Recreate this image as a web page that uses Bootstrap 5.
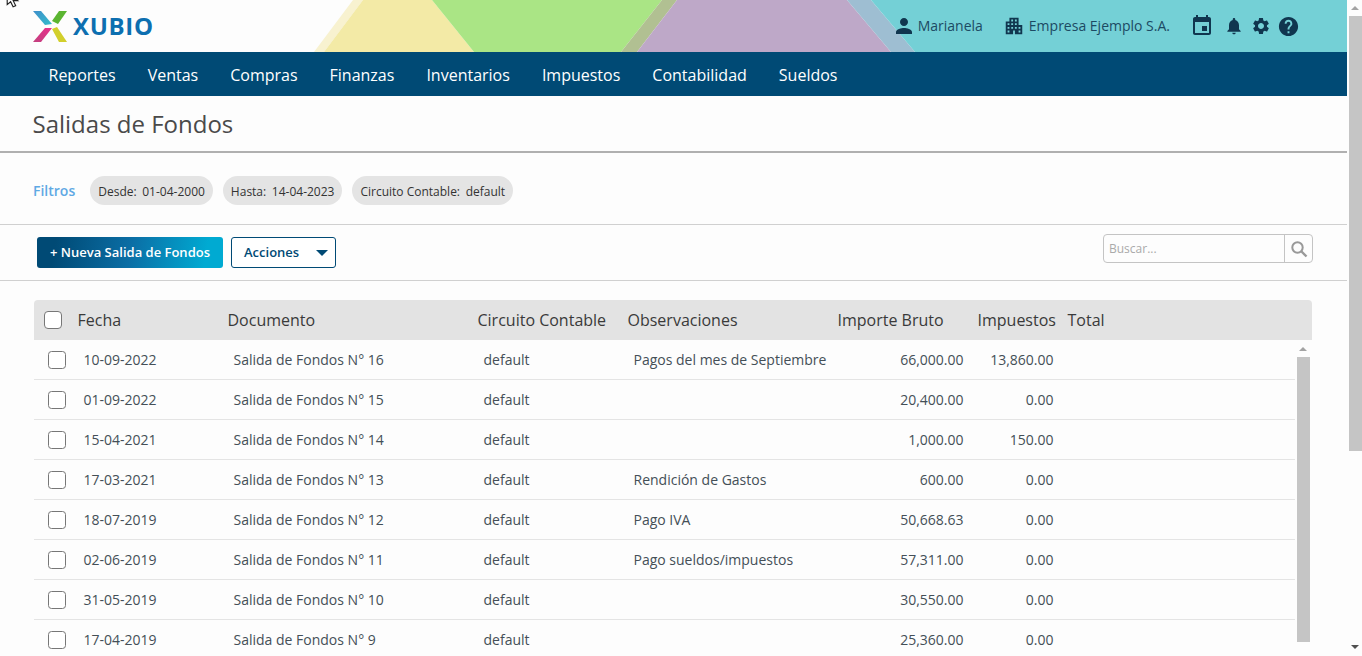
<!DOCTYPE html>
<html lang="es">
<head>
  <meta charset="UTF-8">
  <meta name="viewport" content="width=device-width, initial-scale=1.0">
  <title>Salidas de Fondos</title>
  <link rel="stylesheet" href="https://cdn.jsdelivr.net/npm/bootstrap@5.3.3/dist/css/bootstrap.min.css">
  <style>
    html, body { height: 656px; overflow: hidden; }
    body { background: #fdfdfd; font-family: "Open Sans", "Liberation Sans", sans-serif; color: #3d4852; }
    .app-main { width: 1347px; flex: none; height: 656px; overflow: hidden; }
    .page-bar { width: 15px; flex: none; padding-left: 2px; }
    .bar-thumb { background: #c5c5c5; }
    .arrow-up, .arrow-down { width: 0; height: 0; border-left: 4px solid transparent; border-right: 4px solid transparent; }
    .arrow-up { border-bottom: 4px solid #a3a3a3; }
    .arrow-down { border-top: 4px solid #505050; }
    .page-bar .arrow-up { margin: 6px 0 6px 2px; }
    .page-bar .bar-thumb { height: 435px; }
    .page-bar .arrow-down { margin: auto 0 7px 2px; }

    .top-head { height: 52px; }
    .head-shapes { position: absolute; left: 0; top: 0; width: 1347px; height: 52px; }
    .top-head > .head-row { position: relative; height: 52px; padding-left: 33px; padding-right: 47px; }
    .cursor-mark { position: absolute; left: 6px; top: -9px; }
    .logo-word { font-family: "Open Sans", sans-serif; font-weight: 700; font-size: 24px; letter-spacing: .7px; color: #0d6fb0; line-height: 1; margin-left: 6px; }
    .head-item { font-size: 14px; color: #1c4a63; line-height: 1; }
    .head-ico { fill: #10364f; display: block; flex: none; }
    .ico-user { margin-right: 2px; }
    .ico-firm { margin-right: 4px; }
    .item-firm { margin-left: 20px; }
    .ico-cal { margin-left: 20px; }
    .ico-bell { margin-left: 10px; }
    .ico-gear { margin-left: 7px; }
    .ico-help { margin-left: 6px; }

    .main-nav { background: #004a75; height: 44px; padding-left: 32.5px; }
    .main-nav .nav-link { color: #fff; font-size: 16px; padding: 1px 16px 0; line-height: 44px; }

    .title-bar { height: 57px; padding: 11px 0 0 32.5px; border-bottom: 2px solid #b0b0b0; }
    .title-bar h1 { font-size: 24px; font-weight: 400; color: #4a4a4a; margin: 0; line-height: 34px; }

    .filter-row { height: 72px; padding: 4px 0 0 33px; border-bottom: 1px solid #d0d0d0; }
    .filter-label { font-size: 14px; font-weight: 600; color: #5fa9e4; margin-right: 15px; }
    .filter-chip { background: #e4e4e4; border-radius: 15px; height: 29px; line-height: 31px; padding: 0 8px; font-size: 12px; color: #333; margin-right: 10px; }
    .chip-key { margin-right: 2.5px; }

    .tool-row { height: 56px; padding: 0 34px 0 37px; border-bottom: 1px solid #d0d0d0; }
    .btn-new { background: linear-gradient(100deg, #004a75 10%, #0b6ea5 50%, #00aad2 90%); color: #fff; font-size: 13px; font-weight: 600; border: 0; border-radius: 3px; height: 31px; width: 186px; padding: 0; }
    .btn-new:hover { color: #fff; }
    .btn-acc { background: #fff; color: #004a75; border: 1px solid #004a75; border-radius: 3px; font-size: 13px; font-weight: 600; height: 31px; width: 105px; margin-left: 8px; padding: 0 7px 0 12px; }
    .btn-acc:hover { color: #004a75; background: #fff; border-color: #004a75; }
    .caret-acc { width: 0; height: 0; border-left: 6px solid transparent; border-right: 6px solid transparent; border-top: 6px solid #004a75; }
    .search-box { width: 210px; height: 29px; margin-top: -8px; border: 1px solid #c4c4c4; border-radius: 4px; }
    .search-box input { border: 0; outline: 0; background: transparent; font-size: 12px; padding: 0 5px; min-width: 0; height: 27px; font-family: inherit; }
    .search-box input::placeholder { color: #aaa; opacity: 1; }
    .search-btn { width: 28px; border-left: 1px solid #c4c4c4; }

    .list-wrap { padding: 19px 35px 0 34px; }
    .list-table { table-layout: fixed; border-collapse: separate; border-spacing: 0; margin: 0; }
    .list-table td, .list-table th { padding: 0; vertical-align: middle; border: 0; white-space: nowrap; background: transparent; box-shadow: none; }
    .list-head { background: #e3e3e3; border-radius: 4px 4px 0 0; height: 40px; overflow: hidden; }
    .list-head th { font-size: 16px; font-weight: 400; color: #3a3a3a; height: 40px; }
    .list-head .form-check-input { margin: 0 0 0 10px; }
    .list-body td { height: 40px; font-size: 14px; color: #444f57; border-bottom: 1px solid #e4e4e4; }
    .list-body td:nth-child(n+2) { padding-left: 6px; }
    .list-body td.num { text-align: right; padding-right: 14px; padding-left: 0; }
    .list-body .form-check-input { margin: 0 0 0 14px; }
    .form-check-input { width: 18px; height: 18px; border: 1px solid #777; border-radius: 3px; background-color: #fff; float: none; display: block; }
    .c-0 { width: 43.5px; } .c-1 { width: 150px; } .c-2 { width: 250px; } .c-3 { width: 150px; }
    .c-4 { width: 210px; } .c-5 { width: 140px; } .c-6 { width: 90px; }
    .inner-bar { width: 17px; flex: none; padding-left: 2px; }
    .inner-bar .arrow-up { margin: 7px 0 6px 2px; }
    .inner-bar .bar-thumb { height: 285px; width: 13px; }
    .body-table { width: 1261px; flex: none; }
  </style>
</head>
<body class="d-flex">
  <div class="app-main">
    <header class="top-head position-relative">
      <svg class="head-shapes" viewBox="0 0 1347 52" aria-hidden="true">
        <polygon points="353,0 363,0 324,52 314,52" fill="#f8f2d0"/>
        <polygon points="363,0 432,0 474,52 324,52" fill="#f3eaa6"/>
        <polygon points="432,0 662,0 621,52 474,52" fill="#aae585"/>
        <polygon points="662,0 677,0 637,52 621,52" fill="#b1c092"/>
        <polygon points="677,0 847,0 891,52 637,52" fill="#bea8c8"/>
        <polygon points="847,0 871,0 915,52 891,52" fill="#9ebed2"/>
        <polygon points="871,0 1347,0 1347,52 915,52" fill="#74d0d6"/>
      </svg>
      <svg class="cursor-mark" width="16" height="17" viewBox="0 0 14 15" aria-hidden="true"><path d="M1 1l0 11 3-2.5 2.2 4.5 2.3-1-2.2-4.5 4 0z" fill="#fff" stroke="#222" stroke-width="1"/></svg>
      <div class="head-row d-flex align-items-center">
        <svg width="34" height="31" viewBox="0 0 34 31" aria-hidden="true">
          <defs>
            <linearGradient id="gc" x1="0" y1="0" x2="1" y2="1"><stop offset="0" stop-color="#3f8fcb"/><stop offset="1" stop-color="#33bccb"/></linearGradient>
            <linearGradient id="gm" x1="0" y1="1" x2="1" y2="0"><stop offset="0" stop-color="#c2407e"/><stop offset="1" stop-color="#e8308c"/></linearGradient>
          </defs>
          <polygon points="0,0 8,0 19,13 12,14" fill="url(#gc)"/>
          <polygon points="26,0 34,0 25,13 19,10" fill="#5bb531"/>
          <polygon points="12,17 19,17 8,31 0,31" fill="url(#gm)"/>
          <polygon points="24,16 34,31 26,31 19,18" fill="#d2cf2c"/>
        </svg>
        <span class="logo-word">XUBIO</span>
        <div class="ms-auto d-flex align-items-center">
          <span class="head-item d-flex align-items-center"><svg class="head-ico ico-user" width="24" height="24" viewBox="0 0 24 24"><path d="M12 12c2.21 0 4-1.79 4-4s-1.79-4-4-4-4 1.79-4 4 1.79 4 4 4zm0 2c-2.67 0-8 1.34-8 4v2h16v-2c0-2.66-5.33-4-8-4z"/></svg>Marianela</span>
          <span class="head-item item-firm d-flex align-items-center"><svg class="head-ico ico-firm" width="22" height="22" viewBox="0 0 24 24"><path d="M17 11V3H7v4H3v14h8v-4h2v4h8V11h-4zM7 19H5v-2h2v2zm0-4H5v-2h2v2zm0-4H5V9h2v2zm4 4H9v-2h2v2zm0-4H9V9h2v2zm0-4H9V5h2v2zm4 8h-2v-2h2v2zm0-4h-2V9h2v2zm0-4h-2V5h2v2zm4 12h-2v-2h2v2zm0-4h-2v-2h2v2z"/></svg>Empresa Ejemplo S.A.</span>
          <svg class="head-ico ico-cal" width="24" height="24" viewBox="0 0 24 24"><path d="M17 12h-5v5h5v-5zM16 1v2H8V1H6v2H5c-1.11 0-1.99.9-1.99 2L3 19c0 1.1.89 2 2 2h14c1.1 0 2-.9 2-2V5c0-1.1-.9-2-2-2h-1V1h-2zm3 18H5V8h14v11z"/></svg>
          <svg class="head-ico ico-bell" width="20" height="20" viewBox="0 0 24 24"><path d="M12 22c1.1 0 2-.9 2-2h-4c0 1.1.89 2 2 2zm6-6v-5c0-3.07-1.64-5.64-4.5-6.32V4c0-.83-.67-1.5-1.5-1.5s-1.5.67-1.5 1.5v.68C7.63 5.36 6 7.92 6 11v5l-2 2v1h16v-1l-2-2z"/></svg>
          <svg class="head-ico ico-gear" width="20" height="20" viewBox="0 0 24 24"><path d="M19.14 12.94c.04-.3.06-.61.06-.94 0-.32-.02-.64-.07-.94l2.03-1.58c.18-.14.23-.41.12-.61l-1.92-3.32c-.12-.22-.37-.29-.59-.22l-2.39.96c-.5-.38-1.03-.7-1.62-.94l-.36-2.54c-.04-.24-.24-.41-.48-.41h-3.84c-.24 0-.43.17-.47.41l-.36 2.54c-.59.24-1.13.57-1.62.94l-2.39-.96c-.22-.08-.47 0-.59.22L2.74 8.87c-.12.21-.08.47.12.61l2.03 1.58c-.05.3-.09.63-.09.94s.02.64.07.94l-2.03 1.58c-.18.14-.23.41-.12.61l1.92 3.32c.12.22.37.29.59.22l2.39-.96c.5.38 1.03.7 1.62.94l.36 2.54c.05.24.24.41.48.41h3.84c.24 0 .44-.17.47-.41l.36-2.54c.59-.24 1.13-.56 1.62-.94l2.39.96c.22.08.47 0 .59-.22l1.92-3.32c.12-.22.07-.47-.12-.61l-2.01-1.58zM12 15.6c-1.98 0-3.6-1.62-3.6-3.6s1.62-3.6 3.6-3.6 3.6 1.62 3.6 3.6-1.62 3.6-3.6 3.6z"/></svg>
          <svg class="head-ico ico-help" width="23" height="23" viewBox="0 0 24 24"><path d="M12 2C6.48 2 2 6.48 2 12s4.48 10 10 10 10-4.48 10-10S17.52 2 12 2zm1 17h-2v-2h2v2zm2.07-7.75l-.9.92C13.45 12.9 13 13.5 13 15h-2v-.5c0-1.1.45-2.1 1.17-2.83l1.24-1.26c.37-.36.59-.86.59-1.41 0-1.1-.9-2-2-2s-2 .9-2 2H8c0-2.21 1.79-4 4-4s4 1.79 4 4c0 .88-.36 1.68-.93 2.25z"/></svg>
        </div>
      </div>
    </header>

    <ul class="nav main-nav">
      <li class="nav-item"><a class="nav-link" href="#">Reportes</a></li>
      <li class="nav-item"><a class="nav-link" href="#">Ventas</a></li>
      <li class="nav-item"><a class="nav-link" href="#">Compras</a></li>
      <li class="nav-item"><a class="nav-link" href="#">Finanzas</a></li>
      <li class="nav-item"><a class="nav-link" href="#">Inventarios</a></li>
      <li class="nav-item"><a class="nav-link" href="#">Impuestos</a></li>
      <li class="nav-item"><a class="nav-link" href="#">Contabilidad</a></li>
      <li class="nav-item"><a class="nav-link" href="#">Sueldos</a></li>
    </ul>

    <div class="title-bar"><h1>Salidas de Fondos</h1></div>

    <div class="filter-row d-flex align-items-center">
      <span class="filter-label">Filtros</span>
      <span class="filter-chip"><span class="chip-key">Desde:</span> 01-04-2000</span>
      <span class="filter-chip"><span class="chip-key">Hasta:</span> 14-04-2023</span>
      <span class="filter-chip"><span class="chip-key">Circuito Contable:</span> default</span>
    </div>

    <div class="tool-row d-flex align-items-center">
      <button type="button" class="btn btn-new">+ Nueva Salida de Fondos</button>
      <button type="button" class="btn btn-acc d-flex align-items-center justify-content-between">Acciones<span class="caret-acc"></span></button>
      <div class="search-box ms-auto d-flex">
        <input type="text" class="flex-grow-1" placeholder="Buscar...">
        <span class="search-btn d-flex align-items-center justify-content-center">
          <svg width="18" height="18" viewBox="0 0 18 18" aria-hidden="true"><circle cx="7.5" cy="7.5" r="5.2" fill="none" stroke="#999" stroke-width="2"/><line x1="11.5" y1="11.5" x2="16.5" y2="16.5" stroke="#999" stroke-width="2.4"/></svg>
        </span>
      </div>
    </div>

    <div class="list-wrap">
      <div class="list-head">
        <table class="table list-table">
          <colgroup><col class="c-0"><col class="c-1"><col class="c-2"><col class="c-3"><col class="c-4"><col class="c-5"><col class="c-6"><col></colgroup>
          <thead>
            <tr>
              <th><input class="form-check-input" type="checkbox"></th>
              <th>Fecha</th>
              <th>Documento</th>
              <th>Circuito Contable</th>
              <th>Observaciones</th>
              <th>Importe Bruto</th>
              <th>Impuestos</th>
              <th>Total</th>
            </tr>
          </thead>
        </table>
      </div>
      <div class="d-flex">
        <div class="body-table">
          <table class="table list-table list-body">
            <colgroup><col class="c-0"><col class="c-1"><col class="c-2"><col class="c-3"><col class="c-4"><col class="c-5"><col class="c-6"><col></colgroup>
            <tbody>
              <tr><td><input class="form-check-input" type="checkbox"></td><td>10-09-2022</td><td>Salida de Fondos N° 16</td><td>default</td><td>Pagos del mes de Septiembre</td><td class="num">66,000.00</td><td class="num">13,860.00</td><td></td></tr>
              <tr><td><input class="form-check-input" type="checkbox"></td><td>01-09-2022</td><td>Salida de Fondos N° 15</td><td>default</td><td></td><td class="num">20,400.00</td><td class="num">0.00</td><td></td></tr>
              <tr><td><input class="form-check-input" type="checkbox"></td><td>15-04-2021</td><td>Salida de Fondos N° 14</td><td>default</td><td></td><td class="num">1,000.00</td><td class="num">150.00</td><td></td></tr>
              <tr><td><input class="form-check-input" type="checkbox"></td><td>17-03-2021</td><td>Salida de Fondos N° 13</td><td>default</td><td>Rendición de Gastos</td><td class="num">600.00</td><td class="num">0.00</td><td></td></tr>
              <tr><td><input class="form-check-input" type="checkbox"></td><td>18-07-2019</td><td>Salida de Fondos N° 12</td><td>default</td><td>Pago IVA</td><td class="num">50,668.63</td><td class="num">0.00</td><td></td></tr>
              <tr><td><input class="form-check-input" type="checkbox"></td><td>02-06-2019</td><td>Salida de Fondos N° 11</td><td>default</td><td>Pago sueldos/impuestos</td><td class="num">57,311.00</td><td class="num">0.00</td><td></td></tr>
              <tr><td><input class="form-check-input" type="checkbox"></td><td>31-05-2019</td><td>Salida de Fondos N° 10</td><td>default</td><td></td><td class="num">30,550.00</td><td class="num">0.00</td><td></td></tr>
              <tr><td><input class="form-check-input" type="checkbox"></td><td>17-04-2019</td><td>Salida de Fondos N° 9</td><td>default</td><td></td><td class="num">25,360.00</td><td class="num">0.00</td><td></td></tr>
            </tbody>
          </table>
        </div>
        <div class="inner-bar">
          <div class="arrow-up"></div>
          <div class="bar-thumb"></div>
        </div>
      </div>
    </div>
  </div>
  <div class="page-bar d-flex flex-column">
    <div class="arrow-up"></div>
    <div class="bar-thumb"></div>
    <div class="arrow-down"></div>
  </div>
  <script src="https://cdn.jsdelivr.net/npm/bootstrap@5.3.3/dist/js/bootstrap.bundle.min.js"></script>
</body>
</html>
